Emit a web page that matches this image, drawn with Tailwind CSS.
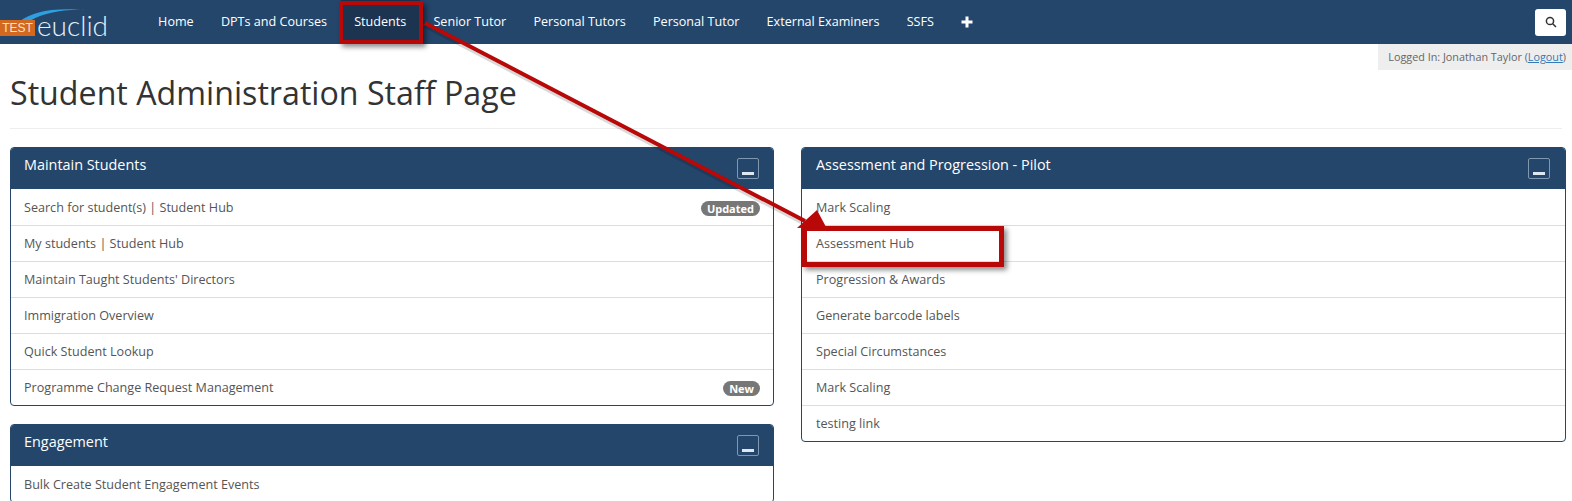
<!DOCTYPE html>
<html lang="en">
<head>
<meta charset="utf-8">
<title>Student Administration Staff Page</title>
<script src="https://cdn.jsdelivr.net/npm/@tailwindcss/browser@4"></script>
</head>
<body class="relative h-[501px] w-[1572px] overflow-hidden bg-white font-['Open_Sans',sans-serif] text-[12.6px] text-[#555]">
<header class="flex h-[44px] items-center bg-[#24466b] text-white">
  <div class="relative h-[44px] w-[144.5px] shrink-0">
    <svg class="absolute left-[14px] top-[6px]" width="80" height="16" viewBox="0 0 80 16"><path d="M6 15 C18 6 38 1 72 4 C48 3 30 7 16 15 Z" fill="#2f9fe0"/></svg>
    <span class="absolute left-0 top-[20px] flex h-[16px] w-[35px] items-center justify-center bg-[#d2691e] font-['Liberation_Sans',sans-serif] text-[12px] text-[#f7e3d0]">TEST</span>
    <span class="absolute left-[37px] top-[6px] font-['Lato',sans-serif] text-[28px] font-light leading-[38px] text-[#e6f0f8]">euclid</span>
  </div>
  <nav class="flex h-full items-center">
    <a class="flex h-full items-center px-[13.6px]">Home</a>
    <a class="flex h-full items-center px-[13.6px]">DPTs and Courses</a>
    <a class="flex h-full items-center bg-[#1c3450] px-[13.6px]">Students</a>
    <a class="flex h-full items-center px-[13.6px]">Senior Tutor</a>
    <a class="flex h-full items-center px-[13.6px]">Personal Tutors</a>
    <a class="flex h-full items-center px-[13.6px]">Personal Tutor</a>
    <a class="flex h-full items-center px-[13.6px]">External Examiners</a>
    <a class="flex h-full items-center px-[13.6px]">SSFS</a>
    <a class="flex h-full items-center px-[13.6px]">
      <svg width="12" height="12" viewBox="0 0 12 12"><path d="M6 0.5V11.5M0.5 6H11.5" stroke="#fff" stroke-width="3"/></svg>
    </a>
  </nav>
  <button class="ml-auto mr-[6px] flex h-[27px] w-[31px] items-center justify-center rounded-[3px] bg-white">
    <svg width="12" height="12" viewBox="0 0 12 12" fill="none" stroke="#333" stroke-width="1.5"><circle cx="5" cy="5" r="3.6"/><path d="M7.7 7.7L11 11"/></svg>
  </button>
</header>
<div class="flex justify-end">
  <div class="flex h-[26px] w-[194px] items-center justify-end bg-[#eee] pr-[6px] text-[10.8px] text-[#666]">
    <span class="whitespace-nowrap">Logged In: Jonathan Taylor (<a class="text-[#337ab7] underline">Logout</a>)</span>
  </div>
</div>
<main class="px-[10px]">
  <h1 class="text-[32.2px] leading-[45px] text-[#333]">Student Administration Staff Page</h1>
  <hr class="mt-[13px] border-[#eee]">
  <div class="mt-[18px] grid grid-cols-[764px_765px] gap-x-[27px]">
    <div class="flex flex-col gap-[18px]">
      <section class="rounded-[4px] border border-[#24466b]">
        <div class="flex h-[41px] items-center justify-between rounded-t-[3px] bg-[#24466b] pl-[13px] pr-[14px] text-[14.4px] text-white">
          <span class="-mt-[7px]">Maintain Students</span>
          <span class="-mt-[1px] flex h-[21px] w-[22px] items-end justify-center rounded-[2px] border border-[#7f97b0] pb-[3px]"><span class="block h-[3px] w-[12px] bg-[#dfe8f0]"></span></span>
        </div>
        <ul>
          <li class="flex h-[36px] items-center justify-between px-[13px] pt-[2px]">Search for student(s) | Student Hub<span class="rounded-full bg-[#777] px-[6px] text-[11px] font-bold leading-[15px] text-white">Updated</span></li>
          <li class="flex h-[36px] items-center border-t border-[#ddd] px-[13px] pt-[2px]">My students | Student Hub</li>
          <li class="flex h-[36px] items-center border-t border-[#ddd] px-[13px] pt-[2px]">Maintain Taught Students' Directors</li>
          <li class="flex h-[36px] items-center border-t border-[#ddd] px-[13px] pt-[2px]">Immigration Overview</li>
          <li class="flex h-[36px] items-center border-t border-[#ddd] px-[13px] pt-[2px]">Quick Student Lookup</li>
          <li class="flex h-[36px] items-center justify-between border-t border-[#ddd] px-[13px] pt-[2px]">Programme Change Request Management<span class="rounded-full bg-[#777] px-[6px] text-[11px] font-bold leading-[15px] text-white">New</span></li>
        </ul>
      </section>
      <section class="rounded-[4px] border border-[#24466b]">
        <div class="flex h-[41px] items-center justify-between rounded-t-[3px] bg-[#24466b] pl-[13px] pr-[14px] text-[14.4px] text-white">
          <span class="-mt-[7px]">Engagement</span>
          <span class="-mt-[1px] flex h-[21px] w-[22px] items-end justify-center rounded-[2px] border border-[#7f97b0] pb-[3px]"><span class="block h-[3px] w-[12px] bg-[#dfe8f0]"></span></span>
        </div>
        <ul>
          <li class="flex h-[36px] items-center px-[13px] pt-[2px]">Bulk Create Student Engagement Events</li>
        </ul>
      </section>
    </div>
    <section class="self-start rounded-[4px] border border-[#24466b]">
      <div class="flex h-[41px] items-center justify-between rounded-t-[3px] bg-[#24466b] pl-[14px] pr-[15px] text-[14.4px] text-white">
        <span class="-mt-[7px]">Assessment and Progression - Pilot</span>
        <span class="-mt-[1px] flex h-[21px] w-[22px] items-end justify-center rounded-[2px] border border-[#7f97b0] pb-[3px]"><span class="block h-[3px] w-[12px] bg-[#dfe8f0]"></span></span>
      </div>
      <ul>
        <li class="flex h-[36px] items-center px-[14px] pt-[2px]">Mark Scaling</li>
        <li class="flex h-[36px] items-center border-t border-[#ddd] px-[14px] pt-[2px]">Assessment Hub</li>
        <li class="flex h-[36px] items-center border-t border-[#ddd] px-[14px] pt-[2px]">Progression &amp; Awards</li>
        <li class="flex h-[36px] items-center border-t border-[#ddd] px-[14px] pt-[2px]">Generate barcode labels</li>
        <li class="flex h-[36px] items-center border-t border-[#ddd] px-[14px] pt-[2px]">Special Circumstances</li>
        <li class="flex h-[36px] items-center border-t border-[#ddd] px-[14px] pt-[2px]">Mark Scaling</li>
        <li class="flex h-[36px] items-center border-t border-[#ddd] px-[14px] pt-[2px]">testing link</li>
      </ul>
    </section>
  </div>
</main>
<!-- Red callout annotations over the page -->
<div class="pointer-events-none absolute left-[339px] top-[1px] h-[43px] w-[84px] border-[4px] border-[#b80808] shadow-[3px_3px_5px_rgba(0,0,0,0.45)]"></div>
<div class="pointer-events-none absolute left-[802px] top-[226px] h-[41px] w-[202px] border-[5px] border-[#b80808] shadow-[3px_3px_5px_rgba(0,0,0,0.45)]"></div>
<svg class="pointer-events-none absolute left-0 top-0" width="1572" height="501" viewBox="0 0 1572 501">
  <path d="M425 23 L805 221" stroke="#000" stroke-opacity="0.15" stroke-width="4" transform="translate(0 3)"/>
  <path d="M425 23 L805 221" stroke="#b80808" stroke-width="4"/>
  <path d="M817 210 L826 227 L797 228 Z" fill="#b80808"/>
</svg>
</body>
</html>
